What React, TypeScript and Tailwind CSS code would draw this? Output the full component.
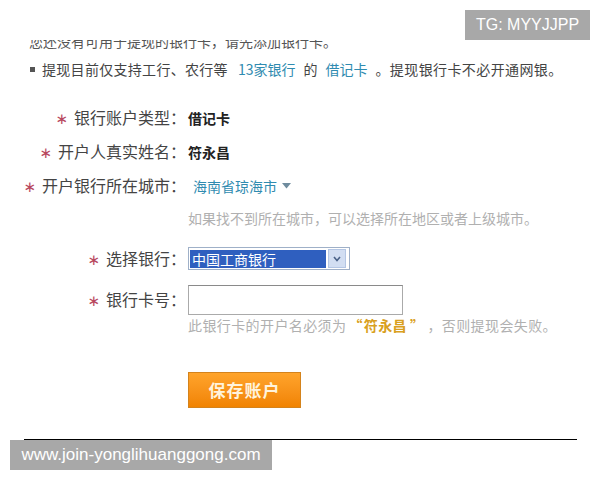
import React from 'react';

// 提现银行卡表单截图
const cjk = { fontFamily: '"Noto Sans CJK SC", "Noto Sans", sans-serif' };
const latin = { fontFamily: '"Liberation Sans", Arial, sans-serif' };

function Star() {
  return (
    <span className="mr-[6px] text-[15px] text-[#b8485e]" style={{ fontFamily: '"DejaVu Sans", sans-serif' }}>
      ∗
    </span>
  );
}

function Label({ text }: { text: string }) {
  return (
    <div className="w-[186px] shrink-0 text-right text-[16px] leading-[20px] text-[#444]">
      <Star />
      {text}
    </div>
  );
}

export default function App() {
  return (
    <div className="relative h-[480px] w-[600px] overflow-hidden bg-white" style={cjk}>
      {/* 水印 */}
      <div
        className="absolute right-[10px] top-[10px] flex h-[30px] w-[125px] items-center justify-center bg-[#a8a8a8] text-[16px] text-white"
        style={latin}
      >
        TG: MYYJJPP
      </div>

      {/* 被裁掉一半的第一行 */}
      <div className="ml-[29px] mt-[40px] h-[10px] overflow-hidden">
        <div className="-mt-[6px] text-[14px] leading-[14px] text-[#555]">
          您还没有可用于提现的银行卡，请先添加银行卡。
        </div>
      </div>

      <div className="ml-[30px] mt-[12px] flex h-[14px] items-center text-[14px] leading-[14px] text-[#444]">
        <span className="mr-[7px] inline-block h-[5px] w-[5px] bg-[#555]"></span>
        <span className="tracking-[0.3px]">提现目前仅支持工行、农行等</span>
        <span className="ml-[10px] text-[#2f8bb0]">13家银行</span>
        <span className="ml-[8px]">的</span>
        <span className="ml-[8px] text-[#2f8bb0]">借记卡</span>
        <span className="ml-[8px] tracking-[0.4px]">。提现银行卡不必开通网银。</span>
      </div>

      {/* 表单 */}
      <div className="mt-[25px] flex h-[34px] items-center">
        <Label text="银行账户类型：" />
        <span className="ml-[2px] text-[14px] font-bold text-[#222]">借记卡</span>
      </div>
      <div className="flex h-[34px] items-center">
        <Label text="开户人真实姓名：" />
        <span className="ml-[2px] text-[14px] font-bold text-[#222]">符永昌</span>
      </div>
      <div className="flex h-[34px] items-center">
        <Label text="开户银行所在城市：" />
        <span className="ml-[7px] text-[14px] text-[#2f8bb0]">海南省琼海市</span>
        <svg className="ml-[5px]" width="9" height="6" viewBox="0 0 9 6">
          <path d="M0 0 L9 0 L4.5 5.5 Z" fill="#6f8c9e" />
        </svg>
      </div>
      <div className="flex h-[30px] items-center pl-[188px] text-[14px] tracking-[0px] text-[#b0b0b0]">
        如果找不到所在城市，可以选择所在地区或者上级城市。
      </div>

      <div className="mt-[14px] flex h-[23px] items-center">
        <Label text="选择银行：" />
        <div className="ml-[2px] flex h-[23px] w-[162px] items-center gap-[2px] border border-[#9fb0c8] bg-white p-[1px]">
          <div className="flex h-[18px] w-[136px] items-center bg-[#2f5fbf] px-[2px] text-[14px] leading-[18px] text-white">
            中国工商银行
          </div>
          <div className="flex h-[19px] w-[18px] items-center justify-center border border-[#b4c6e4] bg-[#d2def2]">
            <svg width="8" height="6" viewBox="0 0 8 6">
              <path d="M1 1 L4 4.5 L7 1" fill="none" stroke="#4a6288" strokeWidth="1.6" />
            </svg>
          </div>
        </div>
      </div>

      <div className="mt-[15px] flex h-[30px] items-center">
        <Label text="银行卡号：" />
        <div className="ml-[2px] h-[30px] w-[215px] border border-[#aaa] border-t-[#8a8a8a] bg-white"></div>
      </div>
      <div className="mt-[3px] flex h-[14px] items-center pl-[188px] text-[14px] leading-[14px] tracking-[0.4px] text-[#b0b0b0]">
        <span>此银行卡的开户名必须为</span>
        <span className="ml-[2px] font-bold text-[#d9a020]">“</span>
        <span className="ml-[1px] font-bold text-[#d9a020]">符永昌</span>
        <span className="ml-[3px] font-bold text-[#d9a020]">”</span>
        <span className="ml-[3px]">，否则提现会失败。</span>
      </div>

      <div className="ml-[188px] mt-[40px] flex h-[36px] w-[113px] items-center justify-center border border-[#d4831c] bg-gradient-to-b from-[#ffa42a] to-[#f18300] text-[17px] font-bold tracking-[1px] text-[#fff3dc]">
        保存账户
      </div>

      <div className="mx-[24px] mt-[31px] h-px w-[553px] bg-black"></div>

      <div
        className="ml-[10px] flex h-[30px] w-[262px] items-center justify-center bg-[#a8a8a8] text-[17px] text-white"
        style={latin}
      >
        www.join-yonglihuanggong.com
      </div>
    </div>
  );
}
